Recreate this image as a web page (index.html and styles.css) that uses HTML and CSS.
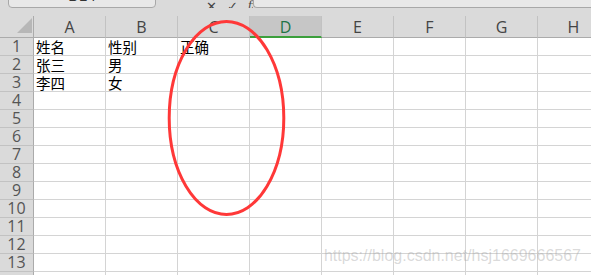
FILE: index.html
```html
<!DOCTYPE html>
<html lang="zh">
<head>
<meta charset="utf-8">
<link rel="stylesheet" href="styles.css">
</head>
<body>
<div class="app">
  <div class="topbar">
    <div class="namebox"><span>D14</span></div>
    <div class="fxicons"><span class="ic">✕</span><span class="ic">✓</span><span class="fx">fx</span></div>
    <div class="formula"></div>
  </div>
  <div class="sheet">
    <div class="corner"><div class="tri"></div></div>
    <div class="ch">A</div><div class="ch">B</div><div class="ch">C</div><div class="ch sel">D</div><div class="ch">E</div><div class="ch">F</div><div class="ch">G</div><div class="ch">H</div>

    <div class="rh">1</div><div class="c">姓名</div><div class="c">性别</div><div class="c">正确</div><div class="c"></div><div class="c"></div><div class="c"></div><div class="c"></div><div class="c"></div>
    <div class="rh">2</div><div class="c">张三</div><div class="c">男</div><div class="c"></div><div class="c"></div><div class="c"></div><div class="c"></div><div class="c"></div><div class="c"></div>
    <div class="rh">3</div><div class="c">李四</div><div class="c">女</div><div class="c"></div><div class="c"></div><div class="c"></div><div class="c"></div><div class="c"></div><div class="c"></div>
    <div class="rh">4</div><div class="c"></div><div class="c"></div><div class="c"></div><div class="c"></div><div class="c"></div><div class="c"></div><div class="c"></div><div class="c"></div>
    <div class="rh">5</div><div class="c"></div><div class="c"></div><div class="c"></div><div class="c"></div><div class="c"></div><div class="c"></div><div class="c"></div><div class="c"></div>
    <div class="rh">6</div><div class="c"></div><div class="c"></div><div class="c"></div><div class="c"></div><div class="c"></div><div class="c"></div><div class="c"></div><div class="c"></div>
    <div class="rh">7</div><div class="c"></div><div class="c"></div><div class="c"></div><div class="c"></div><div class="c"></div><div class="c"></div><div class="c"></div><div class="c"></div>
    <div class="rh">8</div><div class="c"></div><div class="c"></div><div class="c"></div><div class="c"></div><div class="c"></div><div class="c"></div><div class="c"></div><div class="c"></div>
    <div class="rh">9</div><div class="c"></div><div class="c"></div><div class="c"></div><div class="c"></div><div class="c"></div><div class="c"></div><div class="c"></div><div class="c"></div>
    <div class="rh">10</div><div class="c"></div><div class="c"></div><div class="c"></div><div class="c"></div><div class="c"></div><div class="c"></div><div class="c"></div><div class="c"></div>
    <div class="rh">11</div><div class="c"></div><div class="c"></div><div class="c"></div><div class="c"></div><div class="c"></div><div class="c"></div><div class="c"></div><div class="c"></div>
    <div class="rh">12</div><div class="c"></div><div class="c"></div><div class="c"></div><div class="c"></div><div class="c"></div><div class="c"></div><div class="c"></div><div class="c"></div>
    <div class="rh">13</div><div class="c"></div><div class="c"></div><div class="c"></div><div class="c"></div><div class="c"></div><div class="c"></div><div class="c"></div><div class="c"></div>
    <div class="rh"></div><div class="c"></div><div class="c"></div><div class="c"></div><div class="c"></div><div class="c"></div><div class="c"></div><div class="c"></div><div class="c"></div>
  </div>
  <svg class="mark" width="122" height="200" viewBox="0 0 122 200">
    <ellipse cx="60.5" cy="99" rx="57.3" ry="96.5" fill="none" stroke="#ff3838" stroke-width="3"/>
  </svg>
  <div class="watermark">https://blog.csdn.net/hsj1669666567</div>
</div>
</body>
</html>
```

FILE: styles.css
```css
html, body {
  margin: 0;
  padding: 0;
  background: #ffffff;
  overflow: hidden;
}
.app {
  position: relative;
  width: 591px;
  height: 275px;
  overflow: hidden;
  background: #ffffff;
  font-family: "Open Sans", "Noto Sans", sans-serif;
}
.topbar {
  height: 16px;
  background: #dadada;
  display: flex;
  align-items: flex-start;
  overflow: hidden;
}
.namebox {
  margin-left: 8px;
  width: 148px;
  height: 24px;
  margin-top: -16px;
  box-sizing: border-box;
  border: 1px solid #a8a8a8;
  border-radius: 4px;
  background: #e8e8e8;
  display: flex;
  align-items: center;
  justify-content: center;
  font-size: 15px;
  line-height: 16px;
  color: #333;
  font-family: "Liberation Sans", sans-serif;
}
.fxicons {
  width: 97px;
  height: 8px;
  display: flex;
  gap: 10px;
  padding-left: 50px;
  box-sizing: border-box;
  overflow: hidden;
  align-items: flex-end;
  font-size: 13px;
  color: #444;
  line-height: 8px;
}
.fxicons .ic { line-height: 4px; }
.fxicons .fx { font-style: italic; font-family: "Liberation Serif", serif; line-height: 6px; }
.formula {
  flex: 1;
  height: 24px;
  margin-top: -16px;
  box-sizing: border-box;
  border: 1px solid #a8a8a8;
  border-right: none;
  border-radius: 4px 0 0 4px;
  background: #e8e8e8;
}
.sheet {
  display: grid;
  grid-template-columns: 34px repeat(8, 72px);
  grid-template-rows: 22px;
  grid-auto-rows: 18px;
  width: 610px;
}
.corner {
  background: #dadada;
  border-right: 1px solid #ababab;
  border-bottom: 1px solid #ababab;
  box-sizing: border-box;
  display: flex;
  align-items: flex-end;
  justify-content: flex-end;
  padding: 0 1px 4px 0;
}
.tri {
  width: 0;
  height: 0;
  border-left: 15px solid transparent;
  border-bottom: 15px solid #b7b7b7;
}
.ch {
  background: #dadada;
  border-right: 1px solid #c2c2c2;
  border-bottom: 1px solid #ababab;
  box-sizing: border-box;
  display: flex;
  align-items: center;
  justify-content: center;
  font-size: 16px;
  line-height: 18px;
  color: #444;
  padding-top: 1px;
}
.ch.sel {
  background: #c6c6c6;
  color: #217346;
  border-bottom: 2px solid #3c9f3c;
  padding-top: 2px;
}
.rh {
  background: #dadada;
  border-right: 1px solid #ababab;
  border-bottom: 1px solid #c2c2c2;
  box-sizing: border-box;
  display: flex;
  align-items: center;
  justify-content: center;
  font-size: 16px;
  line-height: 17px;
  color: #555;
}
.c {
  border-right: 1px solid #d4d4d4;
  border-bottom: 1px solid #d4d4d4;
  box-sizing: border-box;
  padding-left: 2px;
  font-family: "Noto Sans CJK SC", sans-serif;
  font-size: 14.5px;
  line-height: 17px;
  color: #000;
  white-space: nowrap;
}
.mark {
  position: absolute;
  left: 166px;
  top: 19px;
}
.watermark {
  position: absolute;
  right: 10px;
  top: 246px;
  font-family: "Liberation Sans", Arial, sans-serif;
  font-size: 16px;
  line-height: 20px;
  color: rgba(160, 160, 160, 0.4);
  white-space: nowrap;
}
```
